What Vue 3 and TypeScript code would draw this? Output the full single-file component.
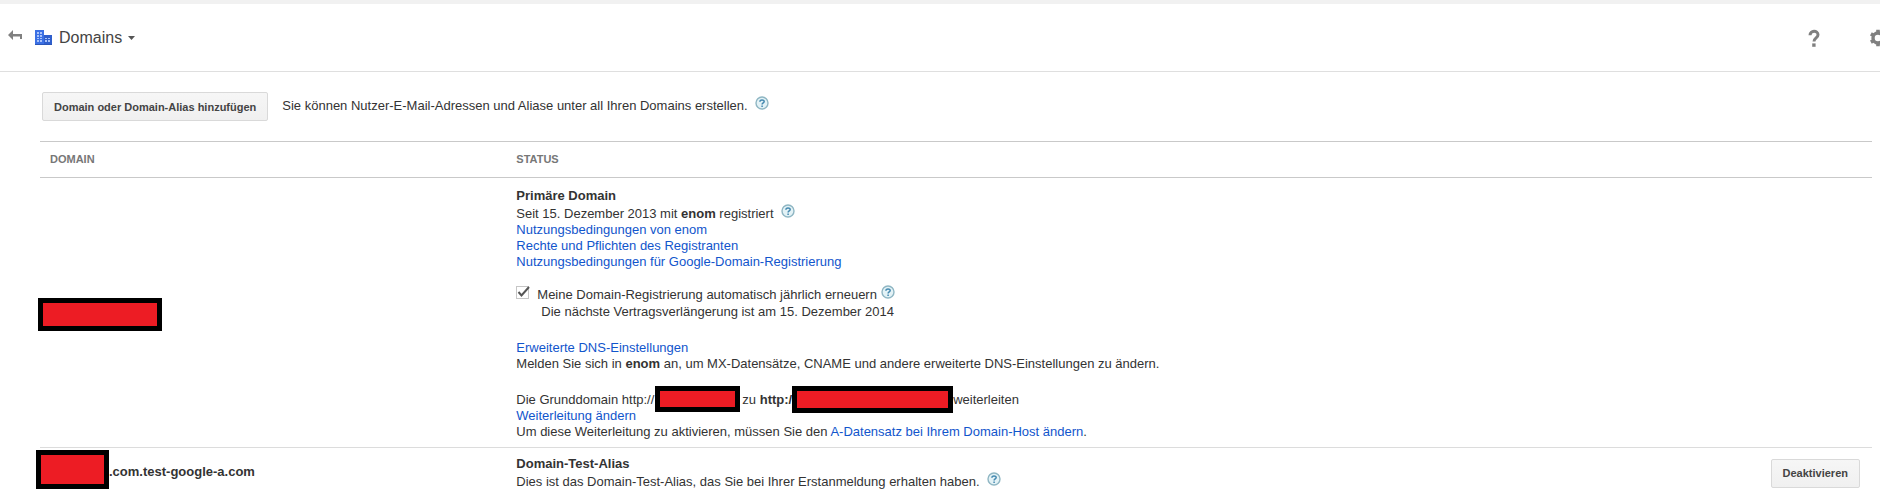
<script setup lang="ts">
import { defineComponent, h, ref } from 'vue'

const HelpIcon = defineComponent({
  setup: () => () =>
    h('button', { class: 'help', type: 'button', 'aria-label': 'Hilfe' }, [
      h('svg', { width: 14, height: 14, viewBox: '0 0 14 14', 'aria-hidden': 'true' }, [
        h('circle', { cx: 7, cy: 7, r: 6, fill: '#e3f2f6', stroke: '#8fb6c3', 'stroke-width': 1.4 }),
        h('path', {
          d: 'M4.9 5.7C4.9 3.3 9.2 3.3 9.2 5.6C9.2 6.9 7.1 7 7.1 8.5M7.1 9.4V10.9',
          fill: 'none',
          stroke: '#4589b0',
          'stroke-width': 1.5,
        }),
      ]),
    ]),
})

const policyLinks: string[] = [
  'Nutzungsbedingungen von enom',
  'Rechte und Pflichten des Registranten',
  'Nutzungsbedingungen für Google-Domain-Registrierung',
]
const autoRenew = ref<boolean>(true)
</script>

<template>
  <div class="page">
    <header class="topbar">
      <button class="icon-button back" type="button" aria-label="Zurück">
        <svg width="14" height="12" viewBox="0 0 14 12" aria-hidden="true">
          <path d="M0 5L5 0V4H14V9H12V6.5H5V10Z" fill="#808080" />
        </svg>
      </button>
      <svg class="logo" width="17" height="15" viewBox="0 0 17 15" aria-hidden="true">
        <path d="M0 0H9V15H0Z" fill="#3b70e4" />
        <path d="M9 5H17V15H9Z" fill="#2f5fcc" />
        <path d="M0 14H17V15H0Z" fill="#2a55b8" />
        <path
          d="M2 2h2v2H2zM5 2h2v2H5zM2 5h2v2H2zM5 5h2v2H5zM2 8h2v1H2zM5 8h2v1H5zM2 10h2v2H2zM5 10h2v2H5zM10 8h2v1h-2zM13 8h2v1h-2zM10 10h2v2h-2zM13 10h2v2h-2z"
          fill="#a9c3fa"
        />
      </svg>
      <button class="title" type="button">
        Domains
        <svg width="7" height="4" viewBox="0 0 7 4" aria-hidden="true">
          <path d="M0 0H7L3.5 4Z" fill="#555" />
        </svg>
      </button>
      <div class="tools">
        <button class="icon-button" type="button" aria-label="Hilfe">
          <svg width="12" height="18" viewBox="0 0 12 18" aria-hidden="true">
            <path
              d="M2 6.2C2 1 10 1 10 5.7C10 9 6 8.8 6 12.6"
              fill="none"
              stroke="#808080"
              stroke-width="3"
            />
            <path d="M4.2 14.4H7.6V17.8H4.2Z" fill="#808080" />
          </svg>
        </button>
        <button class="icon-button" type="button" aria-label="Einstellungen">
          <svg width="18" height="18" viewBox="0 0 18 18" aria-hidden="true">
            <circle cx="9" cy="9" r="5" fill="none" stroke="#808080" stroke-width="3.4" />
            <path
              d="M9 .8V4M9 14V17.2M1.9 4.9L4.7 6.5M13.3 11.5L16.1 13.1M1.9 13.1L4.7 11.5M13.3 6.5L16.1 4.9"
              stroke="#808080"
              stroke-width="3.6"
            />
          </svg>
        </button>
      </div>
    </header>

    <main class="content">
      <div class="actions">
        <button class="button" type="button">Domain oder Domain-Alias hinzufügen</button>
        <p class="line hint">
          Sie können Nutzer-E-Mail-Adressen und Aliase unter all Ihren Domains erstellen.
          <HelpIcon />
        </p>
      </div>

      <table class="domains">
        <thead>
          <tr>
            <th class="name" scope="col">DOMAIN</th>
            <th scope="col">STATUS</th>
            <th class="action" scope="col" aria-label="Aktion"></th>
          </tr>
        </thead>
        <tbody>
          <tr>
            <td class="name"><span class="redacted primary"></span></td>
            <td colspan="2">
              <strong class="line">Primäre Domain</strong>
              <p class="line with-help">
                Seit 15. Dezember 2013 mit <b>enom</b> registriert <HelpIcon />
              </p>
              <ul class="links">
                <li v-for="label in policyLinks" :key="label"><a href="#">{{ label }}</a></li>
              </ul>
              <div class="group renew">
                <span class="check">
                  <input id="renew" v-model="autoRenew" type="checkbox" />
                  <svg
                    v-if="autoRenew"
                    width="14"
                    height="13"
                    viewBox="0 0 14 13"
                    aria-hidden="true"
                  >
                    <path d="M2.5 6L5.5 9.5L13 1" fill="none" stroke="#555" stroke-width="2" />
                  </svg>
                </span>
                <label class="line with-help" for="renew">
                  Meine Domain-Registrierung automatisch jährlich erneuern
                </label>
                <HelpIcon />
              </div>
              <p class="line note">Die nächste Vertragsverlängerung ist am 15. Dezember 2014</p>
              <div class="group">
                <a class="line" href="#">Erweiterte DNS-Einstellungen</a>
                <p class="line">
                  Melden Sie sich in <b>enom</b> an, um MX-Datensätze, CNAME und andere erweiterte
                  DNS-Einstellungen zu ändern.
                </p>
              </div>
              <div class="group">
                <p class="line redirect">
                  <span>Die Grunddomain http://</span>
                  <span class="redacted source"></span>
                  <span>zu <b>http:/</b></span>
                  <span class="redacted target"></span>
                  <span>weiterleiten</span>
                </p>
                <a class="line" href="#">Weiterleitung ändern</a>
                <p class="line">
                  Um diese Weiterleitung zu aktivieren, müssen Sie den
                  <a href="#">A-Datensatz bei Ihrem Domain-Host ändern</a>.
                </p>
              </div>
            </td>
          </tr>
          <tr class="compact">
            <td class="name">
              <div class="alias">
                <span class="redacted prefix"></span><b>.com.test-google-a.com</b>
              </div>
            </td>
            <td>
              <strong class="line">Domain-Test-Alias</strong>
              <p class="line with-help">
                Dies ist das Domain-Test-Alias, das Sie bei Ihrer Erstanmeldung erhalten haben.
                <HelpIcon />
              </p>
            </td>
            <td class="action"><button class="button" type="button">Deaktivieren</button></td>
          </tr>
        </tbody>
      </table>
    </main>
  </div>
</template>

<style>
body {
  margin: 0;
  overflow: hidden;
  background: #fff;
}
</style>

<style scoped>
.page {
  font: 13px/16px 'Liberation Sans', Arial, sans-serif;
  color: #333;
  border-top: 4px solid #f1f1f1;
}
button {
  font-family: inherit;
  cursor: pointer;
}
p,
ul {
  margin: 0;
  padding: 0;
  list-style: none;
}
a {
  color: #15c;
  text-decoration: none;
}
.topbar {
  display: flex;
  align-items: center;
  height: 67px;
  padding-left: 8px;
  border-bottom: 1px solid #dfdfdf;
  overflow: hidden;
}
.icon-button,
.title {
  display: flex;
  padding: 0;
  border: 0;
  background: none;
}
.back {
  margin-right: 13px;
  padding-bottom: 4px;
}
.title {
  align-items: center;
  gap: 6px;
  margin-left: 7px;
  font-size: 16px;
  line-height: 20px;
  color: #444;
}
.tools {
  display: flex;
  gap: 49px;
  margin-left: auto;
  margin-right: -7px;
}
.content {
  padding: 20px 8px 0 40px;
}
.actions {
  display: flex;
  align-items: center;
  gap: 14px;
  margin-left: 2px;
  margin-bottom: 20px;
}
.hint {
  padding-bottom: 3px;
}
.button {
  height: 29px;
  padding: 0 11px;
  border: 1px solid #d9d9d9;
  border-radius: 2px;
  background: linear-gradient(#f6f6f6, #f0f0f0);
  color: #444;
  font-size: 11px;
  font-weight: bold;
  white-space: nowrap;
}
:deep(.help) {
  display: inline-flex;
  margin: 0 0 0 4px;
  padding: 0;
  border: 0;
  background: none;
  vertical-align: 0;
  cursor: pointer;
}
.domains {
  width: 100%;
  table-layout: fixed;
  border-spacing: 0;
}
.domains th {
  height: 33px;
  padding: 0 0 2px;
  border-top: 1px solid #c9c9c9;
  border-bottom: 1px solid #c9c9c9;
  color: #777;
  font-size: 11px;
  text-align: left;
}
.domains td {
  padding: 10px 0 7px;
  border-bottom: 1px solid #dcdcdc;
  white-space: nowrap;
}
.domains .compact td {
  padding-top: 8px;
  padding-bottom: 6px;
}
.domains .name {
  width: 26%;
  padding-left: 10px;
  box-sizing: border-box;
}
.domains td.name,
.domains .compact td.name {
  padding: 0;
}
.domains .action {
  width: 120px;
  padding-right: 12px;
  text-align: right;
}
.line {
  display: block;
}
.with-help {
  height: 18px;
  line-height: 20px;
}
.group {
  margin-top: 20px;
}
.renew {
  display: flex;
  align-items: center;
  height: 18px;
  margin-top: 15px;
}
.renew :deep(.help) {
  margin-left: 4px;
  margin-bottom: 4px;
}
.check {
  position: relative;
  display: flex;
  margin: 0 8px 4px 0;
}
.check input {
  appearance: none;
  width: 13px;
  height: 13px;
  margin: 0;
  border: 1px solid #c6c6c6;
  background: #fff;
}
.check svg {
  position: absolute;
  top: 0;
  left: 0;
  pointer-events: none;
}
.note {
  margin-top: 1px;
  margin-left: 25px;
}
.redacted {
  display: block;
  flex: none;
  box-sizing: border-box;
  border: 5px solid #000;
  background: #ed1c24;
}
.primary {
  width: 124px;
  height: 33px;
  margin-top: 4px;
  margin-left: -2px;
}
.redirect {
  display: flex;
  align-items: center;
  height: 16px;
}
.source {
  width: 85px;
  height: 26px;
  margin: 0 2px 2px 1px;
}
.target {
  width: 161px;
  height: 27px;
  margin-bottom: 2px;
}
.alias {
  display: flex;
  align-items: center;
  margin-left: -4px;
}
.prefix {
  width: 73px;
  height: 39px;
  margin-bottom: 5px;
}
</style>
